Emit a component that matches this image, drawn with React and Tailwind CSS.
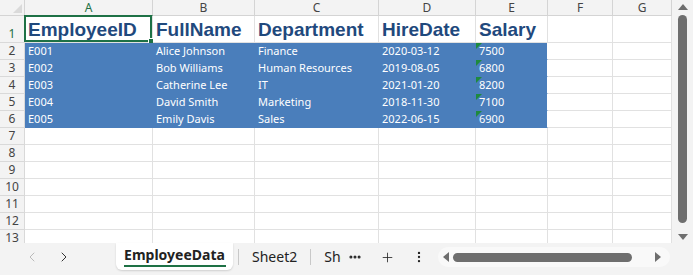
import { ChevronLeft, ChevronRight, Plus, EllipsisVertical, Ellipsis } from "lucide-react";

const cols = ["A", "B", "C", "D", "E", "F", "G"];
const widths = ["w-[128px]", "w-[102px]", "w-[124px]", "w-[97px]", "w-[72px]", "w-[65px]", "w-[59px]"];

const headers = ["EmployeeID", "FullName", "Department", "HireDate", "Salary"];

const rows = [
  ["E001", "Alice Johnson", "Finance", "2020-03-12", "7500"],
  ["E002", "Bob Williams", "Human Resources", "2019-08-05", "6800"],
  ["E003", "Catherine Lee", "IT", "2021-01-20", "8200"],
  ["E004", "David Smith", "Marketing", "2018-11-30", "7100"],
  ["E005", "Emily Davis", "Sales", "2022-06-15", "6900"],
];

const ui = { fontFamily: '"Noto Sans", "Open Sans", sans-serif' };

const Corner = () => (
  <div className="w-[25px] h-[16px] shrink-0 bg-[#f3f3f3] border-r border-b border-[#d4d4d4] relative">
    <div className="absolute right-[2px] bottom-[2px] w-0 h-0 border-l-[9px] border-l-transparent border-b-[9px] border-b-[#dadada]" />
  </div>
);

const RowHead = ({ n, h, active }) => (
  <div
    className={`w-[25px] ${h} shrink-0 bg-[#f3f3f3] border-r border-b border-[#d9d9d9] flex items-end justify-center text-[12px] leading-[16px] ${active ? "text-[#1e7145]" : "text-[#444]"}`}
    style={ui}
  >
    {n}
  </div>
);

// little green "number stored as text" marker
const SalaryFlag = () => (
  <div className="absolute left-0 top-0 w-0 h-0 border-r-[6px] border-r-transparent border-t-[6px] border-t-[#1e8a3e]" />
);

export default function App() {
  return (
    <div className="w-[693px] h-[275px] bg-white flex flex-col overflow-hidden">
      <div className="flex h-[243px] overflow-hidden">
        <div className="w-[672px] flex flex-col overflow-hidden">
          {/* column letters */}
          <div className="flex">
            <Corner />
            {cols.map((c, i) => (
              <div
                key={c}
                className={`${widths[i]} h-[16px] shrink-0 bg-[#f3f3f3] border-r border-b border-[#d4d4d4] flex items-center justify-center text-[12px] ${i === 0 ? "text-[#1e7145] border-b-[#1e7145]" : "text-[#444]"}`}
                style={ui}
              >
                {c}
              </div>
            ))}
          </div>

          {/* row 1 */}
          <div className="flex">
            <RowHead n={1} h="h-[27px]" active />
            {cols.map((c, i) => (
              <div
                key={c}
                className={`${widths[i]} h-[27px] shrink-0 border-r border-b border-[#e1e1e1] relative flex items-center px-[3px]`}
              >
                {i === 0 && (
                  <div className="absolute -left-[1px] -top-[1px] right-0 bottom-0 border-2 border-[#1e7145]">
                    <div className="absolute -right-[4px] -bottom-[4px] w-[6px] h-[6px] bg-[#1e7145] border border-white" />
                  </div>
                )}
                <span
                  className="font-bold text-[19px] text-[#1f497d] whitespace-nowrap leading-none"
                  style={{ fontFamily: '"Liberation Sans", Arial, sans-serif' }}
                >
                  {headers[i]}
                </span>
              </div>
            ))}
          </div>

          {/* data rows */}
          {Array.from({ length: 12 }).map((_, r) => {
            const data = rows[r];
            return (
              <div key={r} className="flex">
                <RowHead n={r + 2} h="h-[17px]" />
                {cols.map((c, i) => {
                  const filled = data && i < 5;
                  return (
                    <div
                      key={c}
                      className={`${widths[i]} h-[17px] shrink-0 border-r border-b relative flex items-center px-[3px] text-[11px] whitespace-nowrap ${filled ? "bg-[#4a7ebb] border-b-[#4a7ebb] text-white" : "border-[#e1e1e1]"} ${filled && i < 4 ? "border-r-[#4a7ebb]" : ""}`}
                      style={ui}
                    >
                      {filled && i === 4 && <SalaryFlag />}
                      {filled ? data[i] : ""}
                    </div>
                  );
                })}
              </div>
            );
          })}
        </div>

        {/* vertical scrollbar */}
        <div className="flex-1 bg-[#f3f3f3] flex flex-col items-center pt-[4px] pb-[3px]">
          <div className="w-0 h-0 border-l-[5px] border-l-transparent border-r-[5px] border-r-transparent border-b-[6px] border-b-[#6e6e6e]" />
          <div className="w-[9px] h-[208px] mt-[5px] rounded-full bg-[#6e6e6e]" />
          <div className="flex-1" />
          <div className="w-0 h-0 border-l-[5px] border-l-transparent border-r-[5px] border-r-transparent border-t-[6px] border-t-[#6e6e6e]" />
        </div>
      </div>

      {/* sheet tabs */}
      <div className="flex-1 bg-[#f3f3f3] flex items-start text-[#222]" style={ui}>
        <div className="flex items-center h-[28px] pl-[24px] gap-[16px] w-[116px] text-[#222]">
          <ChevronLeft size={16} strokeWidth={1.3} className="text-[#b0b0b0]" />
          <ChevronRight size={16} strokeWidth={1.5} className="text-[#333]" />
        </div>
        <div className="w-[117px] h-[27px] bg-white rounded-b-[6px] flex flex-col items-center justify-center shadow-[0_1px_2px_rgba(0,0,0,0.15)]">
          <span className="text-[14px] font-bold leading-[18px] text-[#222]">EmployeeData</span>
          <div className="w-[102px] h-[2px] bg-[#1e7145] mt-[1px]" />
        </div>
        <div className="w-[1px] h-[16px] bg-[#c8c8c8] mt-[6px] ml-[5px]" />
        <div className="text-[14px] leading-[28px] px-[13px]">Sheet2</div>
        <div className="w-[1px] h-[16px] bg-[#c8c8c8] mt-[6px]" />
        <div className="text-[14px] leading-[28px] ml-[13px] w-[17px] overflow-hidden whitespace-nowrap">Sheet3</div>
        <div className="h-[28px] flex items-center ml-[7px]">
          <Ellipsis size={14} strokeWidth={3.2} />
        </div>
        <div className="h-[28px] flex items-center ml-[18px]">
          <Plus size={15} strokeWidth={1.3} />
        </div>
        <div className="h-[28px] flex items-center ml-[17px]">
          <EllipsisVertical size={14} strokeWidth={2} />
        </div>
        <div className="ml-[12px] mt-[4px] w-[232px] h-[20px] bg-[#f9f9f9] rounded-full flex items-center px-[5px]">
          <div className="w-0 h-0 border-t-[5px] border-t-transparent border-b-[5px] border-b-transparent border-r-[6px] border-r-[#6e6e6e]" />
          <div className="w-[179px] h-[9px] rounded-full bg-[#6e6e6e] ml-[4px]" />
          <div className="flex-1" />
          <div className="w-0 h-0 border-t-[5px] border-t-transparent border-b-[5px] border-b-transparent border-l-[6px] border-l-[#6e6e6e] mr-[4px]" />
        </div>
      </div>
    </div>
  );
}
